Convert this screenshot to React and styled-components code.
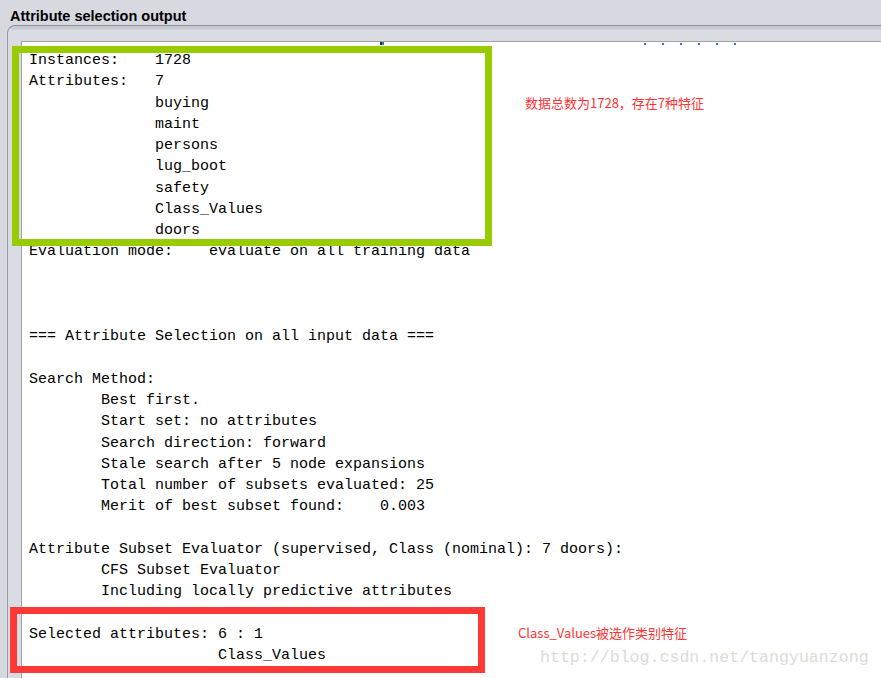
import React from 'react';
import styled, { createGlobalStyle } from 'styled-components';

// --- Output text (as Weka prints it) ---
const outputLines = [
  'Instances:    1728',
  'Attributes:   7',
  '              buying',
  '              maint',
  '              persons',
  '              lug_boot',
  '              safety',
  '              Class_Values',
  '              doors',
  'Evaluation mode:    evaluate on all training data',
  '',
  '',
  '',
  '=== Attribute Selection on all input data ===',
  '',
  'Search Method:',
  '        Best first.',
  '        Start set: no attributes',
  '        Search direction: forward',
  '        Stale search after 5 node expansions',
  '        Total number of subsets evaluated: 25',
  '        Merit of best subset found:    0.003',
  '',
  'Attribute Subset Evaluator (supervised, Class (nominal): 7 doors):',
  '        CFS Subset Evaluator',
  '        Including locally predictive attributes',
  '',
  'Selected attributes: 6 : 1',
  '                     Class_Values',
  '',
];

// little leftover marks sitting on the top border
const ticks = [0, 1, 2, 3, 4, 5];

const GlobalStyle = createGlobalStyle`
  html, body {
    margin: 0;
    padding: 0;
    background: #d6d9e0;
  }
  body {
    width: 881px;
    height: 678px;
    overflow: hidden;
  }
`;

const Page = styled.div`
  position: relative;
  width: 881px;
  height: 678px;
  overflow: hidden;
  background: #d6d9e0;
  display: flex;
  flex-direction: column;
`;

const Title = styled.div`
  height: 19px;
  padding: 7px 0 0 10px;
  font-family: "Liberation Sans", Arial, sans-serif;
  font-weight: bold;
  font-size: 14.5px;
  line-height: 18px;
  color: #000;
`;

const Frame = styled.div`
  flex: 1;
  margin-left: 7px;
  border-left: 1px solid #999ca2;
  border-top: 1px solid #8c8f95;
  border-top-left-radius: 8px;
  background: linear-gradient(#c6c9cf 0px, #c6c9cf 3px, #d9dce2 4px, #d9dce2 100%);
  padding: 15px 0 0 13px;
  display: flex;
  flex-direction: column;
`;

const TextArea = styled.div`
  flex: 1;
  background: #fff;
  border-left: 1px solid #9ea1a6;
  border-top: 1px solid #9ea1a6;
  padding: 8px 0 0 7px;
  display: flex;
  flex-direction: column;
`;

const Line = styled.div`
  width: max-content;
  height: 21.25px;
  font-family: "Liberation Mono", "Courier New", monospace;
  font-size: 15px;
  line-height: 21.25px;
  color: #000;
  white-space: pre;
`;

const Highlight = styled.div`
  position: absolute;
  box-sizing: border-box;
  left: ${p => p.x}px;
  top: ${p => p.y}px;
  width: ${p => p.w}px;
  height: ${p => p.h}px;
  border: 7px solid ${p => p.color};
`;

const Note = styled.div`
  position: absolute;
  left: ${p => p.x}px;
  top: ${p => p.y}px;
  font-family: "Noto Sans CJK SC", "Noto Sans", sans-serif;
  font-size: 13px;
  line-height: 16px;
  color: #ff3333;
  white-space: nowrap;
`;

const Watermark = styled.div`
  position: absolute;
  left: 540px;
  top: 647px;
  font-family: "Liberation Mono", monospace;
  font-size: 16.6px;
  line-height: 22px;
  color: #dcdcd6;
  white-space: nowrap;
`;

const TickRow = styled.div`
  position: absolute;
  top: 43px;
  left: 644px;
  display: flex;
  gap: 16px;
`;

const Tick = styled.span`
  width: 2px;
  height: 2px;
  background: #2a78c8;
`;

const Caret = styled.span`
  position: absolute;
  top: 42px;
  left: 380px;
  width: 4px;
  height: 3px;
  background: linear-gradient(90deg, #3a2a10 50%, #2a78c8 50%);
`;

function App() {
  return (
    <Page>
      <GlobalStyle />
      <Title>Attribute selection output</Title>
      <Frame>
        <TextArea>
          {outputLines.map((line, i) => (
            <Line key={i}>{line}</Line>
          ))}
        </TextArea>
      </Frame>

      <TickRow>
        {ticks.map(t => (
          <Tick key={t} />
        ))}
      </TickRow>
      <Caret />

      <Highlight x={12} y={46} w={480} h={200} color="#99cc00" />
      <Highlight x={10} y={607} w={475} h={66} color="#ff3838" />

      <Note x={525} y={95}>数据总数为1728，存在7种特征</Note>
      <Note x={518} y={625}>Class_Values被选作类别特征</Note>
      <Watermark>http://blog.csdn.net/tangyuanzong</Watermark>
    </Page>
  );
}

export default App;
